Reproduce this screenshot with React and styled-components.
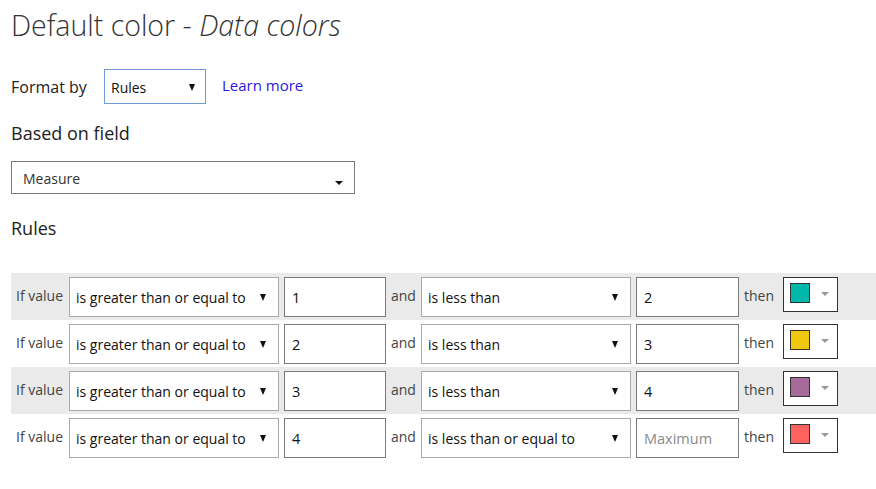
import React from "react";
import styled, { createGlobalStyle } from "styled-components";

const GlobalStyle = createGlobalStyle`
  body {
    margin: 0;
    background: #fff;
    font-family: "Open Sans", "Noto Sans", sans-serif;
    color: #222;
  }
`;

const Page = styled.div`
  padding: 0 0 0 11px;
`;

const Title = styled.h1`
  margin: 0;
  padding-top: 5px;
  font-size: 28.5px;
  font-weight: 300;
  line-height: 40px;
  color: #333;
  span {
    font-style: italic;
  }
`;

const FormatRow = styled.div`
  display: flex;
  align-items: center;
  margin-top: 24px;
  height: 35px;
`;

const FieldLabel = styled.span`
  font-size: 16px;
  color: #222;
  margin-right: 15px;
  width: 78px;
`;

const Caret = styled.span`
  position: absolute;
  right: ${(p) => p.right || 12}px;
  top: 50%;
  margin-top: -3px;
  width: 0;
  height: 0;
  border-left: ${(p) => (p.wide ? 4 : 3.5)}px solid transparent;
  border-right: ${(p) => (p.wide ? 4 : 3.5)}px solid transparent;
  border-top: ${(p) => (p.wide ? 4 : 7)}px solid ${(p) => p.color || "#111"};
`;

const FormatSelect = styled.div`
  position: relative;
  box-sizing: border-box;
  width: 102px;
  height: 35px;
  border: 1px solid #6f9ad6;
  padding: 8px 0 0 6px;
  font-size: 14px;
  color: #111;
`;

const LearnMore = styled.a`
  margin-left: 16px;
  margin-top: -3px;
  font-size: 15px;
  color: #2a17e0;
  text-decoration: none;
`;

const Heading = styled.h2`
  margin: ${(p) => p.top}px 0 0;
  font-size: 18px;
  font-weight: 400;
  line-height: 26px;
  color: #222;
`;

const MeasureBox = styled.div`
  position: relative;
  box-sizing: border-box;
  width: 344px;
  height: 33px;
  margin-top: 15px;
  border: 1px solid #7a7a7a;
  padding: 7px 0 0 11px;
  font-size: 14px;
  color: #333;
  ${Caret} {
    top: auto;
    bottom: 8px;
    margin-top: 0;
  }
`;

const RulesTable = styled.div`
  margin-top: 32px;
`;

const RuleRow = styled.div`
  display: flex;
  align-items: flex-start;
  box-sizing: border-box;
  height: 47px;
  padding-top: 4px;
  background: ${(p) => (p.shaded ? "#eaeaea" : "#fff")};
`;

const RowLabel = styled.span`
  box-sizing: border-box;
  width: ${(p) => p.w}px;
  padding: 9px 0 0 5px;
  font-size: 14px;
  color: #444;
  white-space: nowrap;
`;

const Select = styled.div`
  position: relative;
  box-sizing: border-box;
  width: 210px;
  height: 40px;
  margin-right: 5px;
  border: 1px solid #aaa;
  background: #fff;
  padding: 10px 0 0 6px;
  font-size: 14px;
  color: #111;
  white-space: nowrap;
`;

const Input = styled.div`
  box-sizing: border-box;
  width: ${(p) => p.w}px;
  height: 40px;
  border: 1px solid #7a7a7a;
  background: #fff;
  padding: 10px 0 0 7px;
  font-size: 14.5px;
  color: ${(p) => (p.placeholder ? "#8a8a8a" : "#111")};
`;

const Picker = styled.div`
  position: relative;
  box-sizing: border-box;
  width: 55px;
  height: 35px;
  border: 1px solid #333;
  background: #fff;
  padding: 5px 0 0 6px;
`;

const Swatch = styled.div`
  box-sizing: border-box;
  width: 20px;
  height: 20px;
  border: 1px solid #333;
  background: ${(p) => p.color};
`;

const rules = [
  { min: "1", op: "is less than", max: "2", color: "#01b8aa" },
  { min: "2", op: "is less than", max: "3", color: "#f2c80f" },
  { min: "3", op: "is less than", max: "4", color: "#a66999" },
  { min: "4", op: "is less than or equal to", max: "Maximum", color: "#fd625e", placeholder: true },
];

const App = () => {
  return (
    <Page>
      <GlobalStyle />
      <Title>
        Default color - <span>Data colors</span>
      </Title>
      <FormatRow>
        <FieldLabel>Format by</FieldLabel>
        <FormatSelect>
          Rules
          <Caret right={10} />
        </FormatSelect>
        <LearnMore href="#">Learn more</LearnMore>
      </FormatRow>
      <Heading top={16}>Based on field</Heading>
      <MeasureBox>
        Measure
        <Caret wide right={11} />
      </MeasureBox>
      <Heading top={21}>Rules</Heading>
      <RulesTable>
        {rules.map((r, i) => (
          <RuleRow key={i} shaded={i % 2 === 0}>
            <RowLabel w={58}>If value</RowLabel>
            <Select>
              is greater than or equal to
              <Caret />
            </Select>
            <Input w={102}>{r.min}</Input>
            <RowLabel w={35}>and</RowLabel>
            <Select>
              {r.op}
              <Caret />
            </Select>
            <Input w={103} placeholder={r.placeholder}>{r.max}</Input>
            <RowLabel w={44}>then</RowLabel>
            <Picker>
              <Swatch color={r.color} />
              <Caret wide color="#999" right={8} />
            </Picker>
          </RuleRow>
        ))}
      </RulesTable>
    </Page>
  );
};

export default App;
